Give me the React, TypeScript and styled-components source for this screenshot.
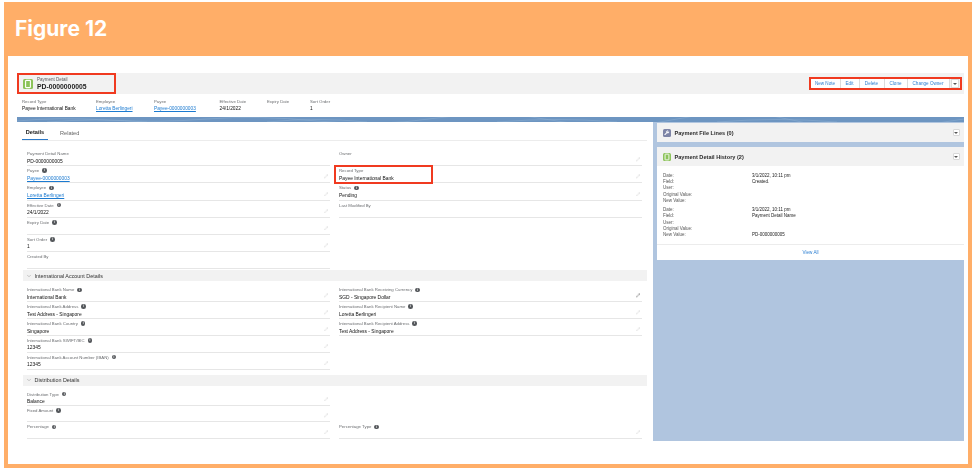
import React, {ReactElement} from 'react';
import styled, {createGlobalStyle} from 'styled-components';
import {Pencil, Wrench, ChevronDown} from 'lucide-react';

const GlobalStyle = createGlobalStyle`
  html, body {
    margin: 0;
    background: #fff;
  }
`

const Page = styled.div`
  width: 976px;
  height: 470px;
  box-sizing: border-box;
  padding: 2px 4px;
  font-family: "Liberation Sans", Arial, sans-serif;
`

const Frame = styled.div`
  height: 466px;
  box-sizing: border-box;
  display: flex;
  flex-direction: column;
  background: #ffae68;
  padding: 0 4px 4px;
`

const Title = styled.div`
  height: 52px;
  padding-bottom: 2px;
  flex-shrink: 0;
  display: flex;
  align-items: center;
  padding-left: 7px;
  color: #fff;
  font-family: Inter, sans-serif;
  font-weight: 700;
  font-size: 21px;
`

const Sheet = styled.div`
  flex: 1;
  min-height: 0;
  background: #fff;
  padding: 17px 4px 0 9px;
  filter: blur(0.35px);
`

const HeaderBar = styled.div`
  height: 21px;
  display: flex;
  justify-content: space-between;
  align-items: center;
  background: #f2f2f2;
  padding-right: 2.5px;
`

const Identity = styled.div`
  width: 99px;
  height: 21px;
  box-sizing: border-box;
  display: flex;
  align-items: center;
  gap: 4px;
  padding-left: 4px;
  border: 2px solid #f03a20;
`

const IconTile = styled.span<{$bg: string; $size: number}>`
  width: ${p => p.$size}px;
  height: ${p => p.$size}px;
  flex-shrink: 0;
  display: inline-flex;
  align-items: center;
  justify-content: center;
  border-radius: 1.5px;
  background: ${p => p.$bg};
  color: #fff;
`

const IdentityText = styled.div`
  display: flex;
  flex-direction: column;
`

const IdentityKind = styled.span`
  font-size: 4.5px;
  line-height: 6px;
  color: #55585c;
`

const IdentityName = styled.span`
  font-size: 6.8px;
  line-height: 8px;
  font-weight: 700;
  color: #1c1c1c;
`

const ActionBox = styled.div`
  display: flex;
  align-items: center;
  height: 13px;
  box-sizing: border-box;
  padding: 0 1px 0 0;
  border: 2px solid #f03a20;
`

const ActionGroup = styled.div`
  display: flex;
  height: 9px;
  box-sizing: border-box;
  background: #fff;
  border-radius: 1px;
`

const ActionButton = styled.div<{$w: number}>`
  width: ${p => p.$w}px;
  box-sizing: border-box;
  display: flex;
  align-items: center;
  justify-content: center;
  font-size: 4.6px;
  color: #2f80d2;
  border-right: 0.5px solid #dcdcdc;
`

const CaretButton = styled.div`
  width: 8px;
  height: 9px;
  box-sizing: border-box;
  margin-left: 1px;
  display: flex;
  align-items: center;
  justify-content: center;
  background: #fff;
  border: 0.5px solid #dcdcdc;
`

const Caret = styled.span`
  border-left: 2px solid transparent;
  border-right: 2px solid transparent;
  border-top: 2.5px solid #555;
`

const MetaRow = styled.div`
  height: 23px;
  display: flex;
  align-items: flex-start;
  padding: 5px 0 0 5px;
  box-sizing: border-box;
`

const MetaItem = styled.div<{$w: number}>`
  width: ${p => p.$w}px;
  display: flex;
  flex-direction: column;
  gap: 1.5px;
`

const MetaLabel = styled.span`
  font-size: 4.3px;
  line-height: 5px;
  color: #6b6d70;
`

const MetaValue = styled.span<{$link?: boolean}>`
  font-size: 4.8px;
  line-height: 6px;
  color: ${p => (p.$link ? '#1b7ad0' : '#111')};
  text-decoration: ${p => (p.$link ? 'underline' : 'none')};
`

const Workspace = styled.div`
  height: 324px;
  display: flex;
  flex-direction: column;
  background: #b0c5df;
`

const Banner = styled.svg`
  display: block;
  width: 100%;
  height: 5px;
  flex-shrink: 0;
  background: #6d95c1;
`

const Columns = styled.div`
  flex: 1;
  min-height: 0;
  display: flex;
  gap: 4px;
`

const MainCard = styled.div`
  width: 636px;
  flex-shrink: 0;
  height: 340px;
  box-sizing: border-box;
  background: #fff;
  padding: 0 6px;
`

const Tabs = styled.div`
  height: 19px;
  box-sizing: border-box;
  display: flex;
  margin-left: -1px;
  border-bottom: 1px solid #ececec;
`

const Tab = styled.div<{$active?: boolean}>`
  width: ${p => (p.$active ? 26 : 30)}px;
  height: 18px;
  box-sizing: border-box;
  display: flex;
  align-items: center;
  justify-content: ${p => (p.$active ? 'center' : 'flex-start')};
  padding: 3px 0 0 ${p => (p.$active ? 0 : 12)}px;
  font-size: 5.6px;
  font-weight: ${p => (p.$active ? 700 : 400)};
  color: ${p => (p.$active ? '#222' : '#666')};
  border-bottom: ${p => (p.$active ? '1px solid #2a78c8' : 'none')};
  white-space: nowrap;
`

const FieldGrid = styled.div<{$rowH: number; $top: number}>`
  display: grid;
  grid-template-columns: 303px 303px;
  grid-auto-rows: ${p => p.$rowH}px;
  column-gap: 9px;
  padding: ${p => p.$top}px 4px 0;
`

const FieldCell = styled.div<{$marked?: boolean}>`
  position: relative;
  box-sizing: border-box;
  padding-top: 2px;
  border-bottom: 1px solid #e6e6e6;
  ${p => p.$marked && `
    &::after {
      content: "";
      position: absolute;
      left: -5px;
      top: -1px;
      width: 99px;
      height: 19px;
      box-sizing: border-box;
      border: 2px solid #f03a20;
    }
  `}
`

const FieldLabel = styled.div`
  display: flex;
  align-items: center;
  gap: 3px;
  height: 5px;
  font-size: 4.3px;
  color: #6b6d70;
  white-space: nowrap;
`

const InfoDot = styled.span`
  width: 4.5px;
  height: 4.5px;
  border-radius: 50%;
  background: #55585c;
  color: #fff;
  font-size: 3px;
  line-height: 4.5px;
  font-weight: 700;
  text-align: center;
`

const FieldValue = styled.div<{$link?: boolean}>`
  height: 6px;
  margin-top: 2.5px;
  font-size: 4.9px;
  line-height: 6px;
  color: ${p => (p.$link ? '#1b7ad0' : '#111')};
  text-decoration: ${p => (p.$link ? 'underline' : 'none')};
`

const EditIcon = styled.span<{$dark?: boolean}>`
  position: absolute;
  right: 2px;
  bottom: 3.5px;
  display: flex;
  color: ${p => (p.$dark ? '#444' : '#c8c8c8')};
`

const SectionBar = styled.div<{$top: number}>`
  height: 11px;
  margin-top: ${p => p.$top}px;
  display: flex;
  align-items: center;
  gap: 2.5px;
  padding-left: 3px;
  background: #f2f2f2;
  font-size: 5.4px;
  color: #333;
`

const SideColumn = styled.div`
  flex: 1;
  min-width: 0;
  display: flex;
  flex-direction: column;
  gap: 5px;
  padding-top: 1px;
`

const SideCard = styled.div`
  background: #fff;
`

const SideHeader = styled.div`
  height: 19px;
  display: flex;
  align-items: center;
  gap: 3.5px;
  padding: 0 4px 0 6px;
  background: #f2f2f2;
  font-size: 5.6px;
  font-weight: 700;
  color: #2b2b2b;
`

const SideName = styled.span`
  flex: 1;
`

const CollapseBox = styled.span`
  width: 5.5px;
  height: 5.5px;
  display: flex;
  align-items: center;
  justify-content: center;
  background: #fff;
  border: 0.5px solid #d8d8d8;
  border-radius: 1px;
`

const HistoryBody = styled.div`
  display: flex;
  flex-direction: column;
  gap: 3px;
  padding: 6px 6px 6px;
  border-bottom: 1px solid #ececec;
`

const HistoryEntry = styled.div`
  display: flex;
  flex-direction: column;
`

const HistoryRow = styled.div`
  height: 6.3px;
  display: grid;
  grid-template-columns: 89px 1fr;
  align-items: center;
  font-size: 4.5px;
  color: #555;
`

const HistoryValue = styled.span`
  color: #222;
`

const ViewAll = styled.div`
  height: 15px;
  display: flex;
  align-items: center;
  justify-content: center;
  font-size: 4.6px;
  color: #2f80d2;
`

interface FieldData {
  label: string;
  value?: string;
  info?: boolean;
  link?: boolean;
  edit?: boolean;
  dark?: boolean;
  marked?: boolean;
}

const detailFields: FieldData[] = [
  {label: 'Payment Detail Name', value: 'PD-0000000005'},
  {label: 'Owner', edit: true},
  {label: 'Payee', value: 'Payee-0000000003', info: true, link: true, edit: true},
  {label: 'Record Type', value: 'Payee International Bank', edit: true, marked: true},
  {label: 'Employee', value: 'Loretta Berlingeri', info: true, link: true, edit: true},
  {label: 'Status', value: 'Pending', info: true, edit: true},
  {label: 'Effective Date', value: '24/1/2022', info: true, edit: true},
  {label: 'Last Modified By'},
  {label: 'Expiry Date', info: true, edit: true},
  {label: ''},
  {label: 'Sort Order', value: '1', info: true, edit: true},
  {label: ''},
  {label: 'Created By'},
  {label: ''},
];

const bankFields: FieldData[] = [
  {label: 'International Bank Name', value: 'International Bank', info: true, edit: true},
  {label: 'International Bank Receiving Currency', value: 'SGD - Singapore Dollar', info: true, edit: true, dark: true},
  {label: 'International Bank Address', value: 'Test Address - Singapore', info: true, edit: true},
  {label: 'International Bank Recipient Name', value: 'Loretta Berlingeri', info: true, edit: true},
  {label: 'International Bank Country', value: 'Singapore', info: true, edit: true},
  {label: 'International Bank Recipient Address', value: 'Test Address - Singapore', info: true, edit: true},
  {label: 'International Bank SWIFT/BIC', value: '12345', info: true, edit: true},
  {label: ''},
  {label: 'International Bank Account Number (IBAN)', value: '12345', info: true, edit: true},
  {label: ''},
];

const distributionFields: FieldData[] = [
  {label: 'Distribution Type', value: 'Balance', info: true, edit: true},
  {label: ''},
  {label: 'Fixed Amount', info: true, edit: true},
  {label: ''},
  {label: 'Percentage', info: true, edit: true},
  {label: 'Percentage Type', info: true, edit: true},
];

const metaItems = [
  {w: 74, label: 'Record Type', value: 'Payee International Bank'},
  {w: 58, label: 'Employee', value: 'Loretta Berlingeri', link: true},
  {w: 65.5, label: 'Payee', value: 'Payee-0000000003', link: true},
  {w: 47.5, label: 'Effective Date', value: '24/1/2022'},
  {w: 43, label: 'Expiry Date', value: ''},
  {w: 40, label: 'Sort Order', value: '1'},
];

const actions = [
  {w: 30, label: 'New Note'},
  {w: 19, label: 'Edit'},
  {w: 25, label: 'Delete'},
  {w: 23, label: 'Clone'},
  {w: 42, label: 'Change Owner'},
];

const history = [
  [['Date:', '3/1/2022, 10:11 pm'], ['Field:', 'Created.'], ['User:', ''], ['Original Value:', ''], ['New Value:', '']],
  [['Date:', '3/1/2022, 10:11 pm'], ['Field:', 'Payment Detail Name'], ['User:', ''], ['Original Value:', ''], ['New Value:', 'PD-0000000005']],
];

const DocGlyph = ({size} : {size: number}) : ReactElement => (
  <svg width={size} height={size} viewBox="0 0 10 10" fill="none" stroke="#fff" strokeWidth="1.1">
    <rect x="2.6" y="1.4" width="4.8" height="7.2" rx="0.6"/>
  </svg>
);

const Field = ({field} : {field: FieldData}) : ReactElement => {
  if (!field.label) {
    return <div/>;
  }
  return (
    <FieldCell $marked={field.marked}>
      <FieldLabel>
        {field.label}
        {field.info && <InfoDot>i</InfoDot>}
      </FieldLabel>
      {field.value && <FieldValue $link={field.link}>{field.value}</FieldValue>}
      {field.edit && (
        <EditIcon $dark={field.dark}>
          <Pencil size={4.5} strokeWidth={1.6}/>
        </EditIcon>
      )}
    </FieldCell>
  );
};

const App = () : ReactElement => {
  return (
    <Page>
      <GlobalStyle/>
      <Frame>
        <Title>Figure 12</Title>
        <Sheet>
          <HeaderBar>
            <Identity>
              <IconTile $bg="#8cc35a" $size={10}><DocGlyph size={10}/></IconTile>
              <IdentityText>
                <IdentityKind>Payment Detail</IdentityKind>
                <IdentityName>PD-0000000005</IdentityName>
              </IdentityText>
            </Identity>
            <ActionBox>
              <ActionGroup>
                {actions.map(a => <ActionButton key={a.label} $w={a.w}>{a.label}</ActionButton>)}
              </ActionGroup>
              <CaretButton><Caret/></CaretButton>
            </ActionBox>
          </HeaderBar>

          <MetaRow>
            {metaItems.map(m => (
              <MetaItem key={m.label} $w={m.w}>
                <MetaLabel>{m.label}</MetaLabel>
                <MetaValue $link={m.link}>{m.value}</MetaValue>
              </MetaItem>
            ))}
          </MetaRow>

          <Workspace>
            <Banner viewBox="0 0 947 5" preserveAspectRatio="none" fill="none" stroke="#8fb0d3" strokeWidth="0.5">
              <path d="M0 4 Q40 0 90 3 T190 2 T300 4 T420 1 T540 4 T660 2 T780 4 T947 2"/>
              <path d="M30 5 Q80 1 130 5 M250 5 Q300 0 350 5 M480 5 Q540 0 600 5 M700 5 Q760 0 820 5"/>
            </Banner>
            <Columns>
              <MainCard>
                <Tabs>
                  <Tab $active>Details</Tab>
                  <Tab>Related</Tab>
                </Tabs>
                <FieldGrid $rowH={17.2} $top={8}>
                  {detailFields.map((f, i) => <Field key={i} field={f}/>)}
                </FieldGrid>
                <SectionBar $top={1}>
                  <ChevronDown size={6} strokeWidth={1.5} color="#777"/>
                  International Account Details
                </SectionBar>
                <FieldGrid $rowH={16.85} $top={4}>
                  {bankFields.map((f, i) => <Field key={i} field={f}/>)}
                </FieldGrid>
                <SectionBar $top={5}>
                  <ChevronDown size={6} strokeWidth={1.5} color="#777"/>
                  Distribution Details
                </SectionBar>
                <FieldGrid $rowH={16.4} $top={4}>
                  {distributionFields.map((f, i) => <Field key={i} field={f}/>)}
                </FieldGrid>
              </MainCard>

              <SideColumn>
                <SideCard>
                  <SideHeader>
                    <IconTile $bg="#7d84a6" $size={8}><Wrench size={5.5} fill="#fff" strokeWidth={1}/></IconTile>
                    <SideName>Payment File Lines (0)</SideName>
                    <CollapseBox><Caret/></CollapseBox>
                  </SideHeader>
                </SideCard>
                <SideCard>
                  <SideHeader>
                    <IconTile $bg="#8cc35a" $size={8}><DocGlyph size={8}/></IconTile>
                    <SideName>Payment Detail History (2)</SideName>
                    <CollapseBox><Caret/></CollapseBox>
                  </SideHeader>
                  <HistoryBody>
                    {history.map((entry, i) => (
                      <HistoryEntry key={i}>
                        {entry.map(([k, v]) => (
                          <HistoryRow key={k}>
                            <span>{k}</span>
                            <HistoryValue>{v}</HistoryValue>
                          </HistoryRow>
                        ))}
                      </HistoryEntry>
                    ))}
                  </HistoryBody>
                  <ViewAll>View All</ViewAll>
                </SideCard>
              </SideColumn>
            </Columns>
          </Workspace>
        </Sheet>
      </Frame>
    </Page>
  );
};

export default App;
